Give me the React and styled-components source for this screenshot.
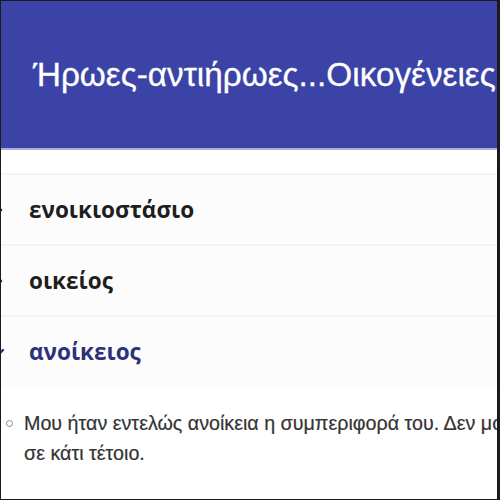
import React from 'react';
import styled, { createGlobalStyle } from 'styled-components';

const GlobalStyle = createGlobalStyle`
  html, body {
    margin: 0;
    padding: 0;
    background: #ffffff;
  }
  body {
    font-family: "Open Sans", "Noto Sans", sans-serif;
  }
`;

const Frame = styled.div`
  width: 500px;
  height: 500px;
  box-sizing: border-box;
  border: 1px solid #1a1a1a;
  border-right-width: 3px;
  overflow: hidden;
  background: #ffffff;
`;

const Header = styled.header`
  height: 149px;
  background-color: #3c43a7;
  border-bottom: 2px solid #a9aedb;
  display: flex;
  align-items: center;
  padding-left: 32px;
  box-sizing: border-box;
`;

const Title = styled.h1`
  margin: 0;
  font-family: "Liberation Sans", Arial, sans-serif;
  font-weight: 400;
  font-size: 33.3px;
  color: #ffffff;
  white-space: nowrap;
  -webkit-text-stroke: 0.3px #ffffff;
`;

const List = styled.div`
  margin-top: 23px;
  margin-left: -10px;
`;

const Row = styled.div`
  height: 71px;
  display: flex;
  align-items: center;
  gap: 24px;
  background-color: #fcfcfc;
  border-top: 2px solid #f3f3f3;
  box-sizing: border-box;
`;

const Chevron = styled.svg`
  width: 14px;
  height: 14px;
  flex: none;
  color: ${(p) => (p.$open ? '#2b2f6e' : '#222222')};
`;

const Term = styled.span`
  font-size: 22.5px;
  font-weight: 700;
  color: ${(p) => (p.$open ? '#2d3177' : '#1e1e1e')};
`;

const Examples = styled.ul`
  list-style: none;
  margin: 0;
  padding: 22px 0 0 5px;
`;

const Example = styled.li`
  display: flex;
  gap: 11px;
  font-family: "Liberation Sans", Arial, sans-serif;
  font-size: 19.7px;
  line-height: 30px;
  color: #333333;
  white-space: nowrap;
  -webkit-text-stroke: 0.2px #333333;
`;

const Bullet = styled.span`
  flex: none;
  width: 5px;
  height: 5px;
  margin-top: 12px;
  border: 1px solid #8a8a8a;
  border-radius: 50%;
`;

const terms = [
  { word: 'ενοικιοστάσιο', open: false },
  { word: 'οικείος', open: false },
  { word: 'ανοίκειος', open: true },
];

export default function App() {
  return (
    <>
      <GlobalStyle />
      <Frame>
        <Header>
          <Title>Ήρωες-αντιήρωες...Οικογένειες</Title>
        </Header>
        <List>
          {terms.map((t) => (
            <Row key={t.word}>
              <Chevron $open={t.open} viewBox="0 0 14 14" fill="none" stroke="currentColor" strokeWidth="2.4" strokeLinecap="round" strokeLinejoin="round">
                {t.open ? <path d="M2 5 L7 10 L12 5" /> : <path d="M5 2 L10 7 L5 12" />}
              </Chevron>
              <Term $open={t.open}>{t.word}</Term>
            </Row>
          ))}
        </List>
        <Examples>
          <Example>
            <Bullet />
            <span>
              Μου ήταν εντελώς ανοίκεια η συμπεριφορά του. Δεν μου φαινόταν ικανός να μπλέξει
              <br />
              σε κάτι τέτοιο.
            </span>
          </Example>
        </Examples>
      </Frame>
    </>
  );
}
